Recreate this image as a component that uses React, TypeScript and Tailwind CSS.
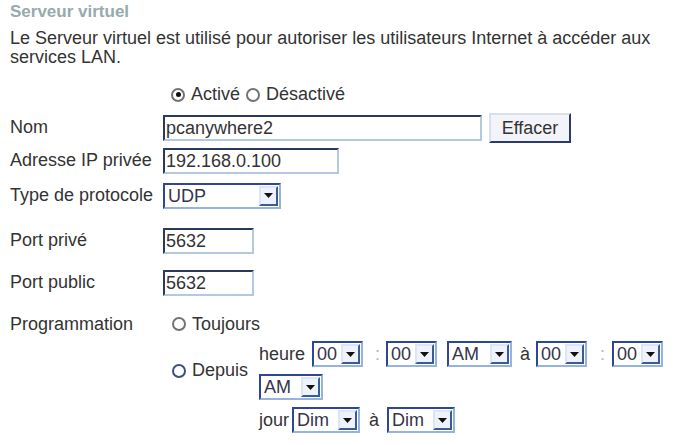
import React from "react";

function Radio({ checked = false, blue = false }: { checked?: boolean; blue?: boolean }) {
  return (
    <span
      className={
        "inline-flex w-[14px] h-[14px] shrink-0 rounded-full border-2 bg-white items-center justify-center " +
        (blue ? "border-[#3a4f8a]" : "border-[#737373]")
      }
    >
      {checked ? <span className="w-[5px] h-[5px] rounded-full bg-[#111]" /> : null}
    </span>
  );
}

function TextBox({ value, w }: { value: string; w: string }) {
  return (
    <div
      className={
        "h-[26px] border-2 border-t-[#2b3a5c] border-l-[#2b3a5c] border-b-[#b3c9e2] border-r-[#b3c9e2] bg-white flex items-center pl-[1px] text-[18px] text-[#333] leading-none " +
        w
      }
    >
      {value}
    </div>
  );
}

function Select({ value, w }: { value: string; w: string }) {
  return (
    <div
      className={
        "h-[26px] shrink-0 border-2 border-t-[#2d4796] border-l-[#2d4796] border-b-[#94b3e0] border-r-[#94b3e0] bg-white flex items-stretch " +
        w
      }
    >
      <div className="flex-1 flex items-center pl-[3px] text-[18px] text-[#34344c] leading-none overflow-hidden">
        {value}
      </div>
      <div className="w-[19px] my-[1px] mr-[1px] bg-[#eef2fb] border-2 border-t-[#dce5f5] border-l-[#dce5f5] border-b-[#3b5a9e] border-r-[#3b5a9e] flex items-center justify-center">
        <svg width="9" height="5" viewBox="0 0 9 5">
          <path d="M0 0 H9 L4.5 5 Z" fill="#111" />
        </svg>
      </div>
    </div>
  );
}

function Colon({ cls }: { cls: string }) {
  return <span className={"text-[18px] text-[#b5b5b5] leading-none " + cls}>:</span>;
}

export default function App() {
  return (
    <div className="w-[673px] h-[445px] bg-white font-['Liberation_Sans',Arial,sans-serif] text-[#333] pl-[10px] pt-[2px] overflow-hidden">
      <div className="text-[17px] font-bold text-[#97aaad] leading-[20px]">Serveur virtuel</div>
      <p className="mt-[7px] text-[18px] leading-[19px] text-[#333] w-[660px]">
        Le Serveur virtuel est utilisé pour autoriser les utilisateurs Internet à accéder aux services LAN.
      </p>

      <div className="flex flex-col text-[18px]">
        <div className="mt-[11px] h-[33px] flex items-center pl-[161px] gap-[6px]">
          <Radio checked />
          <span>Activé</span>
          <Radio />
          <span>Désactivé</span>
        </div>

        <div className="h-[33px] flex items-center">
          <span className="w-[153px]">Nom</span>
          <TextBox value="pcanywhere2" w="w-[319px]" />
          <button className="ml-[7px] h-[30px] w-[82px] bg-[#f3f3fa] border-2 border-t-[#d9def0] border-l-[#d9def0] border-b-[#2c3b68] border-r-[#2c3b68] text-[18px] text-[#333] leading-none">
            Effacer
          </button>
        </div>

        <div className="h-[33px] flex items-center">
          <span className="w-[153px]">Adresse IP privée</span>
          <TextBox value="192.168.0.100" w="w-[176px]" />
        </div>

        <div className="h-[37px] flex items-center">
          <span className="w-[153px]">Type de protocole</span>
          <Select value="UDP" w="w-[118px]" />
        </div>

        <div className="mt-[10px] h-[33px] flex items-center">
          <span className="w-[153px]">Port privé</span>
          <TextBox value="5632" w="w-[91px]" />
        </div>

        <div className="mt-[9px] h-[33px] flex items-center">
          <span className="w-[153px]">Port public</span>
          <TextBox value="5632" w="w-[91px]" />
        </div>

        <div className="mt-[10px] h-[30px] flex items-center">
          <span className="w-[153px]">Programmation</span>
          <div className="flex items-center gap-[6px] pl-[9px]">
            <Radio />
            <span>Toujours</span>
          </div>
        </div>

        <div className="mt-[2px] grid grid-cols-[249px_1fr] items-center">
          <div className="flex items-center gap-[6px] pl-[162px]">
            <Radio blue />
            <span>Depuis</span>
          </div>
          <div className="flex flex-col gap-[7px]">
            <div className="h-[26px] flex items-center">
              <span className="mr-[7px]">heure</span>
              <Select value="00" w="w-[51px]" />
              <Colon cls="ml-[12px] mr-[6px]" />
              <Select value="00" w="w-[51px]" />
              <Select value="AM" w="w-[65px] ml-[10px]" />
              <span className="ml-[8px] mr-[6px]">à</span>
              <Select value="00" w="w-[51px]" />
              <Colon cls="ml-[13px] mr-[7px]" />
              <Select value="00" w="w-[51px]" />
            </div>
            <div className="h-[26px] flex items-center">
              <Select value="AM" w="w-[64px]" />
            </div>
          </div>
          <div />
          <div className="mt-[7px] h-[26px] flex items-center">
            <span className="mr-[3px]">jour</span>
            <Select value="Dim" w="w-[68px]" />
            <span className="ml-[9px] mr-[8px]">à</span>
            <Select value="Dim" w="w-[68px]" />
          </div>
        </div>
      </div>
    </div>
  );
}
